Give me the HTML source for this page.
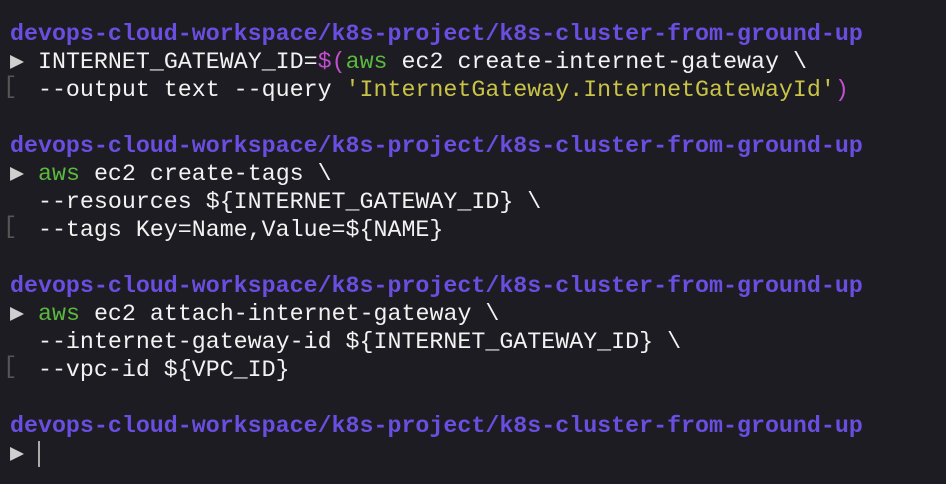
<!DOCTYPE html><html><head><style>
body{margin:0;background:#1d1c22;width:946px;height:484px;overflow:hidden}
pre{margin:0;position:absolute;left:10px;top:20px;font-family:"Liberation Mono",monospace;font-size:23.3px;line-height:28px;color:#f2f2f2}
.p{color:#6a4ee0;font-weight:bold}.g{color:#5bb83e}.y{color:#c9c447}.m{color:#c14fd0}.t{color:#cfcfcf}
.b{position:absolute;left:3px;color:#555;font-size:24px;font-family:"Liberation Mono",monospace}
.c{display:inline-block;width:2px;height:26px;background:#aaa;vertical-align:middle}
</style></head><body>
<pre><span class="p">devops-cloud-workspace/k8s-project/k8s-cluster-from-ground-up</span>
<span class="t">▶</span> INTERNET_GATEWAY_ID=<span class="m">$(</span><span class="g">aws</span> ec2 create-internet-gateway \
  --output text --query <span class="y">'InternetGateway.InternetGatewayId'</span><span class="m">)</span>

<span class="p">devops-cloud-workspace/k8s-project/k8s-cluster-from-ground-up</span>
<span class="t">▶</span> <span class="g">aws</span> ec2 create-tags \
  --resources ${INTERNET_GATEWAY_ID} \
  --tags Key=Name,Value=${NAME}

<span class="p">devops-cloud-workspace/k8s-project/k8s-cluster-from-ground-up</span>
<span class="t">▶</span> <span class="g">aws</span> ec2 attach-internet-gateway \
  --internet-gateway-id ${INTERNET_GATEWAY_ID} \
  --vpc-id ${VPC_ID}

<span class="p">devops-cloud-workspace/k8s-project/k8s-cluster-from-ground-up</span>
<span class="t">▶</span> <span class="c"></span></pre>
<span class="b" style="top:74px">[</span>
<span class="b" style="top:214px">[</span>
<span class="b" style="top:354px">[</span>
</body></html>
